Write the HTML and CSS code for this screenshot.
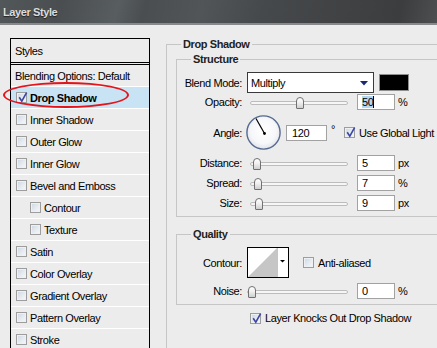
FILE: index.html
```html
<!DOCTYPE html>
<html>
<head>
<meta charset="utf-8">
<title>Layer Style</title>
<link rel="stylesheet" href="styles.css">
</head>
<body>
<div class="titlebar">Layer Style</div>
<div class="main">
  <div class="stylelist">
    <div class="item head">Styles</div>
    <div class="item plain">Blending Options: Default</div>
    <div class="item selected"><span class="cb checked"><svg viewBox="0 0 11 11" width="11" height="11"><path d="M2.2 5.2 L4.8 9.2 L9.6 0.6" fill="none" stroke="#3d46a6" stroke-width="1.6"/></svg></span><b>Drop Shadow</b></div>
    <div class="item"><span class="cb"></span>Inner Shadow</div>
    <div class="item"><span class="cb"></span>Outer Glow</div>
    <div class="item"><span class="cb"></span>Inner Glow</div>
    <div class="item"><span class="cb"></span>Bevel and Emboss</div>
    <div class="item sub"><span class="cb"></span>Contour</div>
    <div class="item sub"><span class="cb"></span>Texture</div>
    <div class="item"><span class="cb"></span>Satin</div>
    <div class="item"><span class="cb"></span>Color Overlay</div>
    <div class="item"><span class="cb"></span>Gradient Overlay</div>
    <div class="item"><span class="cb"></span>Pattern Overlay</div>
    <div class="item"><span class="cb"></span>Stroke</div>
    <span class="mark"></span>
  </div>

  <fieldset class="panel">
    <legend>Drop Shadow</legend>
    <fieldset class="group">
      <legend>Structure</legend>
      <div class="row r-blend">
        <span class="lbl">Blend Mode:</span>
        <div class="select"><span>Multiply</span><svg width="8" height="5" viewBox="0 0 8 5"><path d="M0 0 H8 L4 4.5 Z" fill="#1b2a6e"/></svg></div>
        <span class="swatch"></span>
      </div>
      <div class="row r-opacity">
        <span class="lbl">Opacity:</span>
        <div class="slider"><span class="thumb" style="left:46px"></span></div>
        <span class="num"><span class="sel">50</span></span>
        <span class="unit">%</span>
      </div>
      <div class="row r-angle">
        <span class="lbl">Angle:</span>
        <svg class="dial" width="35" height="35" viewBox="0 0 35 35">
          <defs>
            <radialGradient id="dg" cx="50%" cy="45%" r="55%">
              <stop offset="0" stop-color="#ffffff"/>
              <stop offset="0.7" stop-color="#f6f7f9"/>
              <stop offset="1" stop-color="#dfe3ea"/>
            </radialGradient>
          </defs>
          <circle cx="17.5" cy="17.5" r="16.6" fill="url(#dg)" stroke="#56698f" stroke-width="1.4"/>
          <line x1="18.5" y1="18.5" x2="10" y2="3.5" stroke="#000" stroke-width="1.2"/>
          <circle cx="18.5" cy="18.5" r="1.4" fill="#000"/>
        </svg>
        <span class="num wide">120</span>
        <span class="deg">°</span>
        <span class="cb checked"><svg viewBox="0 0 11 11" width="11" height="11"><path d="M2.2 5.2 L4.8 9.2 L9.6 0.6" fill="none" stroke="#3d46a6" stroke-width="1.6"/></svg></span>
        <span class="cbtext">Use Global Light</span>
      </div>
      <div class="row r-distance">
        <span class="lbl">Distance:</span>
        <div class="slider"><span class="thumb" style="left:3px"></span></div>
        <span class="num">5</span>
        <span class="unit">px</span>
      </div>
      <div class="row r-spread">
        <span class="lbl">Spread:</span>
        <div class="slider"><span class="thumb" style="left:4px"></span></div>
        <span class="num">7</span>
        <span class="unit">%</span>
      </div>
      <div class="row r-size">
        <span class="lbl">Size:</span>
        <div class="slider"><span class="thumb" style="left:5px"></span></div>
        <span class="num">9</span>
        <span class="unit">px</span>
      </div>
    </fieldset>

    <fieldset class="group quality">
      <legend>Quality</legend>
      <div class="row r-contour">
        <span class="lbl">Contour:</span>
        <svg class="contour" width="42" height="31" viewBox="0 0 42 31">
          <rect x="0.5" y="0.5" width="41" height="30" fill="#fff" stroke="#000"/>
          <polygon points="1,30 30,1 30,30" fill="#c6c6c6"/>
          <line x1="30.5" y1="1" x2="30.5" y2="30" stroke="#c6c6c6"/>
          <path d="M33 13 H38 L35.5 15.5 Z" fill="#000"/>
        </svg>
        <span class="cb aa"></span>
        <span class="cbtext">Anti-aliased</span>
      </div>
      <div class="row r-noise">
        <span class="lbl">Noise:</span>
        <div class="slider long"><span class="thumb" style="left:1px"></span></div>
        <span class="num">0</span>
        <span class="unit">%</span>
      </div>
    </fieldset>

    <div class="row r-knock">
      <span class="cb checked"><svg viewBox="0 0 11 11" width="11" height="11"><path d="M2.2 5.2 L4.8 9.2 L9.6 0.6" fill="none" stroke="#3d46a6" stroke-width="1.6"/></svg></span>
      <span class="cbtext">Layer Knocks Out Drop Shadow</span>
    </div>
  </fieldset>
</div>
</body>
</html>
```
FILE: styles.css
```css
html, body {
  margin: 0;
  padding: 0;
  overflow: hidden;
}
body {
  width: 437px;
  height: 348px;
  background: #ececec;
  font-family: "Liberation Sans", Arial, sans-serif;
  font-size: 11px;
  letter-spacing: -0.4px;
  color: #000;
}
.titlebar {
  height: 23px;
  box-sizing: border-box;
  padding: 6px 0 0 3px;
  line-height: 13px;
  border-bottom: 2px solid #878a8b;
  height: 25px;
  background: linear-gradient(105deg, #52575a 0%, #4a4e50 14%, #585d60 27%, #4a4e50 33%, #515558 46%, #46494b 60%, #404244 78%, #3c3d3f 91%, #4d4f51 100%);
  color: #dcdcdc;
  font-weight: bold;
  text-shadow: 0 1px 1px #222;
}
.main {
  display: flex;
  align-items: flex-start;
  padding: 13px 0 0 10px;
}

/* style list */
.stylelist {
  position: relative;
  flex: none;
  width: 140px;
  box-sizing: border-box;
  border: 1px solid #000;
  border-bottom: none;
}
.item {
  height: 21px;
  border-bottom: 1px solid #fff;
  display: flex;
  align-items: center;
  gap: 3px;
  padding-left: 5px;
  white-space: nowrap;
}
.item.head {
  height: 23px;
  border-bottom: 3px double #000;
  padding-left: 4px;
}
.item.plain {
  padding-left: 4px;
}
.item.sub {
  padding-left: 19px;
}
.item.selected {
  background: #c7e3f4;
}
.mark {
  position: absolute;
  left: -8px;
  top: 43px;
  width: 126px;
  height: 26px;
  box-sizing: border-box;
  border: 2px solid #e3141b;
  border-radius: 50%;
}

/* checkbox */
.cb {
  flex: none;
  width: 11px;
  height: 11px;
  box-sizing: border-box;
  border: 1px solid #9d9d9d;
  background: linear-gradient(135deg, #cdd5df 0%, #e6ebf0 55%, #f7f9fb 100%);
  box-shadow: inset 0 0 0 1px #eef1f4;
  position: relative;
}
.cb.checked svg {
  position: absolute;
  left: 0;
  top: -1px;
}

/* right panel */
fieldset {
  margin: 0;
  min-width: 0;
  border: 1px solid #c6c6c6;
}
legend {
  padding: 0 2px;
  font-weight: bold;
  line-height: 13px;
  color: #222;
}
.panel {
  flex: none;
  width: 300px;
  height: 340px;
  box-sizing: border-box;
  margin-left: 16px;
  padding: 2px 0 0 9px;
}
.panel > legend {
  margin-left: 5px;
}
.group {
  padding: 6px 0 5px 0;
}
.group > legend {
  margin-left: 14px;
}
.group.quality {
  margin-top: 11px;
}

.row {
  display: flex;
  align-items: center;
  white-space: nowrap;
}
.lbl {
  flex: none;
  width: 65px;
  margin-right: 5px;
  text-align: right;
}
.r-blend { height: 21px; }
.r-opacity { height: 16px; margin-top: 1px; }
.r-angle { height: 35px; margin-top: 5px; }
.r-distance { height: 16px; margin-top: 5px; }
.r-spread { height: 16px; margin-top: 4px; }
.r-size { height: 16px; margin-top: 4px; }
.r-contour { height: 31px; }
.r-noise { height: 16px; margin-top: 5px; }
.r-knock { height: 12px; margin-top: 7px; margin-left: 74px; }

.select {
  width: 127px;
  height: 21px;
  box-sizing: border-box;
  border: 1px solid #3a3a3a;
  background: #fff;
  display: flex;
  align-items: center;
  justify-content: space-between;
  padding: 1px 5px 0 3px;
}
.swatch {
  width: 30px;
  height: 17px;
  box-sizing: border-box;
  margin-left: 5px;
  background: #000;
  border: 1px solid #8f8f8f;
}

.slider {
  position: relative;
  flex: none;
  width: 98px;
  height: 16px;
  margin-left: 3px;
}
.slider.long {
  width: 101px;
  margin-left: 0;
}
.slider::before {
  content: "";
  position: absolute;
  left: 0;
  right: 0;
  top: 7px;
  height: 4px;
  box-sizing: border-box;
  border: 1px solid #bcbcbc;
  border-radius: 3px;
  background: #f6f6f6;
}
.thumb {
  position: absolute;
  top: 3px;
  width: 8px;
  height: 12px;
  box-sizing: border-box;
  border: 1px solid #707070;
  border-radius: 4px 4px 1px 1px;
  background: linear-gradient(#ffffff 0%, #f0f0f0 45%, #cfcfcf 100%);
}

.num {
  flex: none;
  width: 38px;
  height: 16px;
  box-sizing: border-box;
  margin-left: 9px;
  padding-left: 4px;
  border: 1px solid #a2a2a2;
  background: #fff;
  line-height: 15px;
}
.num.wide {
  width: 41px;
  margin-left: 5px;
  padding-left: 5px;
}
.sel {
  background: #b3d6f1;
  border-right: 1px solid #000;
}
.unit {
  margin-left: 3px;
}
.dial {
  flex: none;
  margin-left: -1px;
}
.deg {
  margin-left: 4px;
  align-self: flex-start;
  margin-top: 8px;
}
.r-angle .cb {
  margin-left: 9px;
}
.cbtext {
  margin-left: 4px;
}
.contour {
  flex: none;
}
.cb.aa {
  margin-left: 14px;
}
```
